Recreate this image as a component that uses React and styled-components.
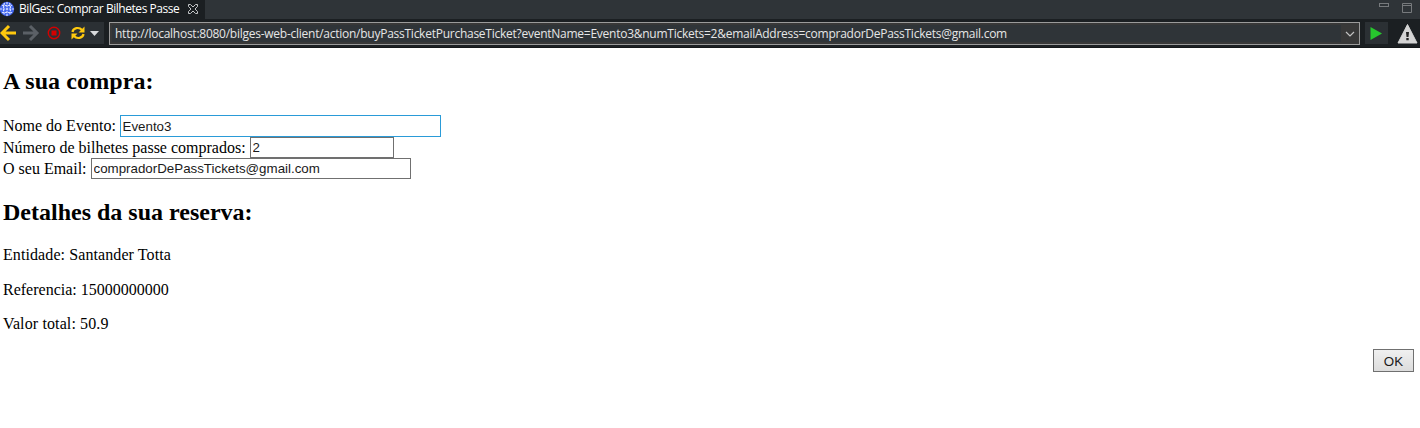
import React from "react";
import styled, { createGlobalStyle } from "styled-components";

const GlobalStyle = createGlobalStyle`
  * { box-sizing: border-box; }
  body { margin: 0; background: #fff; overflow: hidden; }
  svg { display: block; flex: none; }
`;

const Window = styled.div`
  height: 428px;
  display: flex;
  flex-direction: column;
  background: #fff;
`;

const TabBar = styled.header`
  display: flex;
  justify-content: space-between;
  height: 19px;
  background: #2f3438;
`;

const Tab = styled.div`
  display: flex;
  align-items: center;
  width: 205px;
  height: 19px;
  padding-bottom: 2px;
  background: #1b1f22;
`;

const TabTitle = styled.span`
  width: 168px;
  margin-left: 4px;
  font: 12px/16px "Open Sans", "Noto Sans", sans-serif;
  letter-spacing: -0.45px;
  color: #fff;
  white-space: nowrap;
`;

const WindowButtons = styled.div`
  display: flex;
  gap: 13px;
  padding: 3px 8px 0 0;
`;

const Toolbar = styled.nav`
  display: flex;
  height: 29px;
  padding-top: 3px;
  background: #1b1f22;
  border-bottom: 1px solid #15181a;
`;

const NavGroup = styled.div`
  display: flex;
  width: 104px;
  height: 22px;
  background: #2b3034;
`;

const AddressBar = styled.div`
  display: flex;
  align-items: center;
  justify-content: space-between;
  width: 1251px;
  height: 23px;
  margin-left: 5px;
  padding: 2px;
  background: #383838;
  border: 1px solid #9b9b9b;
`;

const Address = styled.span`
  width: 1229px;
  height: 17px;
  padding-left: 3px;
  background: #2f3438;
  font: 12px/17px "Open Sans", "Noto Sans", sans-serif;
  letter-spacing: -0.255px;
  color: #e6e6e6;
  white-space: nowrap;
`;

const RunButton = styled.div`
  display: flex;
  width: 23px;
  height: 22px;
  margin-left: 5px;
  margin-right: 9px;
  background: #2b3034;
`;

const Page = styled.main`
  display: flex;
  flex-direction: column;
  padding: 19px 6px 0 3px;
  font: 16px/20px "Liberation Serif", "Times New Roman", serif;
  color: #000;
`;

const Heading = styled.h2`
  margin: ${(p) => p.$top || 0}px 0 ${(p) => p.$bottom}px;
  font-size: 24px;
  line-height: 28px;
  font-weight: bold;
  letter-spacing: ${(p) => p.$spacing || 0}px;
`;

const Field = styled.label`
  display: flex;
  align-items: center;
  height: ${(p) => p.$height || 21}px;
`;

const Caption = styled.span`
  width: ${(p) => p.$width}px;
  line-height: ${(p) => p.$line || 20}px;
  white-space: nowrap;
`;

const Input = styled.input`
  width: ${(p) => p.$width}px;
  height: ${(p) => (p.$active ? 22 : 21)}px;
  padding: 1px 2px 1px 1.500px;
  border: 1px solid ${(p) => (p.$active ? "#2a9bd8" : "#707070")};
  border-radius: 0;
  outline: none;
  background: #fff;
  font: 13.33px "Liberation Sans", Arial, sans-serif;
  color: #1a1a1a;
`;

const Detail = styled.p`
  margin: 0 0 ${(p) => p.$bottom}px;
  letter-spacing: ${(p) => p.$spacing || 0}px;
`;

const OkButton = styled.button`
  align-self: flex-end;
  width: 41px;
  height: 23px;
  padding: 1px 0 0;
  border: 1px solid #707070;
  border-radius: 0;
  background: linear-gradient(#f0f0f0, #dcdcdc);
  font: 13.33px "Liberation Sans", Arial, sans-serif;
  color: #1a1a1a;
`;

const Globe = () => (
  <svg width="15" height="17" viewBox="0 0 15 17">
    <circle cx="7" cy="9" r="7.2" fill="#4468ee" />
    <g fill="none" stroke="#d6deff" strokeWidth="1.2" strokeDasharray="2.200 .8">
      <path d="M7 2v14M0 9h14M2 5.500h10M2 12.500h10" />
      <path d="M4.500 3Q2.500 9 4.500 15M9.500 3Q11.500 9 9.500 15" />
    </g>
  </svg>
);

const CloseTab = () => (
  <svg width="12" height="12" viewBox="0 0 12 12">
    <path d="M1.5 1.5h2L6 4l2.500-2.500h2v2L8 6l2.500 2.500v2h-2L6 8l-2.500 2.500h-2v-2L4 6 1.500 3.500z" fill="none" stroke="#c4c6c8" />
  </svg>
);

const NavIcons = () => (
  <svg width="104" height="22" viewBox="0 0 104 22">
    <path d="M16 11H3M9 4L2 11l7 7" fill="none" stroke="#ffc90e" strokeWidth="3" />
    <path d="M23 11h13M30 4l7 7-7 7" fill="none" stroke="#5b6066" strokeWidth="3" />
    <circle cx="54" cy="11" r="5.700" fill="none" stroke="#d40000" strokeWidth="1.400" />
    <rect x="51.500" y="8.500" width="5" height="5" fill="#d40000" />
    <g fill="none" stroke="#ffc90e" strokeWidth="2.200">
      <path d="M72.500 10C73 6 79 4.500 82 8M83.500 12C83 16 77 17.500 74 14" />
    </g>
    <path d="M84.500 4.500v6h-6zM71.500 17.500v-6h6z" fill="#ffc90e" />
    <path d="M90 9h9l-4.500 5z" fill="#d8dadc" />
  </svg>
);

export default function App() {
  return (
    <Window>
      <GlobalStyle />
      <TabBar>
        <Tab>
          <Globe />
          <TabTitle>BilGes: Comprar Bilhetes Passe</TabTitle>
          <CloseTab />
        </Tab>
        <WindowButtons>
          <svg width="10" height="10" viewBox="0 0 10 10">
            <rect x=".5" y=".5" width="9" height="3" fill="none" stroke="#777a7d" />
          </svg>
          <svg width="10" height="10" viewBox="0 0 10 10">
            <path d="M.5.500h9v9h-9zM.5 2.500h9" fill="none" stroke="#777a7d" />
          </svg>
        </WindowButtons>
      </TabBar>
      <Toolbar>
        <NavGroup>
          <NavIcons />
        </NavGroup>
        <AddressBar>
          <Address>
            http://localhost:8080/bilges-web-client/action/buyPassTicketPurchaseTicket?eventName=Evento3&amp;numTickets=2&amp;emailAddress=compradorDePassTickets@gmail.com
          </Address>
          <svg width="16" height="17" viewBox="0 0 16 17">
            <path d="M5 7l4 4 4-4" fill="none" stroke="#c2c2c2" strokeWidth="1.200" />
          </svg>
        </AddressBar>
        <RunButton>
          <svg width="23" height="22" viewBox="0 0 23 22">
            <path d="M5.500 5v13L17 11.500z" fill="#27c72e" />
          </svg>
        </RunButton>
        <svg width="21" height="22" viewBox="0 0 21 22">
          <path d="M10.500 2.500L20 21H1z" fill="#d4d4d4" stroke="#d4d4d4" strokeLinejoin="round" />
          <path d="M9 10h3l-.5 5h-2zM9.300 16h2.400v2.200H9.300z" fill="#222" />
        </svg>
      </Toolbar>
      <Page>
        <Heading $bottom={20} $spacing={0.1}>A sua compra:</Heading>
        <Field $height={22}>
          <Caption $width={117}>Nome do Evento:</Caption>
          <Input $active $width={321} defaultValue="Evento3" />
        </Field>
        <Field>
          <Caption $width={247} $line={19}>Número de bilhetes passe comprados:</Caption>
          <Input $width={144} defaultValue="2" />
        </Field>
        <Field>
          <Caption $width={88}>O seu Email:</Caption>
          <Input $width={320} defaultValue="compradorDePassTickets@gmail.com" />
        </Field>
        <Heading $top={19} $bottom={19}>Detalhes da sua reserva:</Heading>
        <Detail $bottom={15} $spacing={0.09}>Entidade: Santander Totta</Detail>
        <Detail $bottom={14}>Referencia: 15000000000</Detail>
        <Detail $bottom={15} $spacing={0.12}>Valor total: 50.9</Detail>
        <OkButton type="button">OK</OkButton>
      </Page>
    </Window>
  );
}
